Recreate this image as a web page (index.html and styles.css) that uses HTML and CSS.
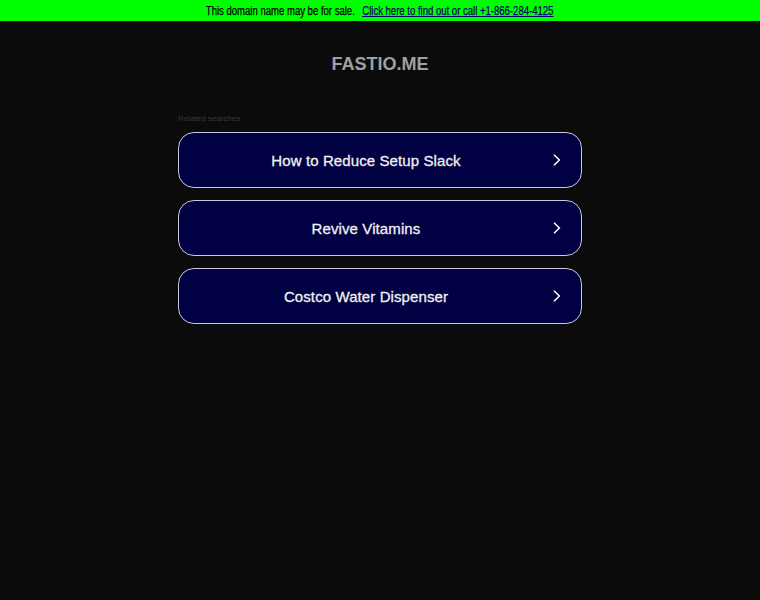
FILE: index.html
```html
<!DOCTYPE html>
<html>
<head>
<meta charset="utf-8">
<link rel="stylesheet" href="styles.css">
</head>
<body>
<div class="topbar">
  <div class="topbar-inner">
    <span class="sale">This domain name may be for sale.</span>
    <a class="sale-link" href="#">Click here to find out or call +1-866-284-4125</a>
  </div>
</div>
<div class="main">
  <h1 class="domain">FASTIO.ME</h1>
  <div class="related">
    <div class="related-title">Related searches</div>
    <a class="btn" href="#"><span class="btn-text">How to Reduce Setup Slack</span><svg class="chev" width="8" height="12" viewBox="0 0 8 12"><path d="M1 0.8 L6.4 6 L1 11.2" fill="none" stroke="#fff" stroke-width="1.5"/></svg></a>
    <a class="btn" href="#"><span class="btn-text">Revive Vitamins</span><svg class="chev" width="8" height="12" viewBox="0 0 8 12"><path d="M1 0.8 L6.4 6 L1 11.2" fill="none" stroke="#fff" stroke-width="1.5"/></svg></a>
    <a class="btn" href="#"><span class="btn-text">Costco Water Dispenser</span><svg class="chev" width="8" height="12" viewBox="0 0 8 12"><path d="M1 0.8 L6.4 6 L1 11.2" fill="none" stroke="#fff" stroke-width="1.5"/></svg></a>
  </div>
</div>
</body>
</html>
```
FILE: styles.css
```css
html, body {
  margin: 0;
  padding: 0;
  background: #0b0b0b;
  font-family: "Liberation Sans", Arial, sans-serif;
}
.topbar {
  background: #00ff00;
  height: 21px;
  display: flex;
  align-items: center;
  justify-content: center;
  font-size: 12px;
  color: #000;
}
.topbar-inner {
  display: inline-block;
  white-space: nowrap;
  transform: scaleX(0.795);
  -webkit-text-stroke: 0.25px currentColor;
}
.sale { margin-right: 6px; }
.sale-link { color: #000066; text-decoration: underline; }
.main {
  display: flex;
  flex-direction: column;
  align-items: center;
}
.domain {
  margin: 32px 0 0;
  font-size: 18px;
  font-weight: bold;
  color: #a0a0a0;
  line-height: 22px;
}
.related {
  width: 404px;
  margin-top: 39px;
  display: flex;
  flex-direction: column;
  gap: 12px;
}
.related-title {
  font-size: 8px;
  color: #3a3a3a;
  margin-bottom: -3px;
  line-height: 9px;
}
.btn {
  box-sizing: border-box;
  height: 56px;
  border: 1px solid #c8c8e0;
  border-radius: 16px;
  background: #000042;
  display: flex;
  align-items: center;
  justify-content: center;
  position: relative;
  text-decoration: none;
}
.btn-text {
  color: #f0f0f0;
  font-size: 15px;
  letter-spacing: 0.1px;
  margin-right: 28px;
  -webkit-text-stroke: 0.3px #f0f0f0;
}
.chev {
  position: absolute;
  right: 20px;
  top: 50%;
  transform: translateY(-50%);
}
```
